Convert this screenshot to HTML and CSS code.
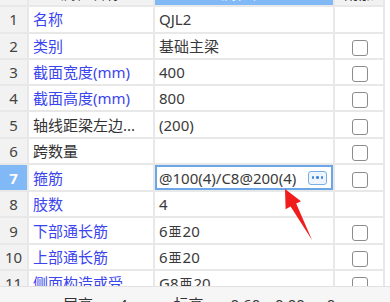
FILE: index.html
```html
<!DOCTYPE html>
<html lang="zh-CN">
<head>
  <meta charset="UTF-8">
  <meta name="viewport" content="width=device-width, initial-scale=1.0">
  <title>属性编辑器</title>
  <link rel="stylesheet" href="styles.css">
</head>
<body>
  <div class="panel">
    <div class="grid-area">
      <table class="props">
        <colgroup>
          <col class="col-num">
          <col class="col-name">
          <col class="col-value">
          <col class="col-extra">
        </colgroup>
        <thead>
          <tr>
            <th class="num"></th>
            <th>属性名称</th>
            <th class="active">属性值</th>
            <th>附加</th>
          </tr>
        </thead>
        <tbody>
          <tr>
            <td class="num">1</td>
            <td class="name">名称</td>
            <td class="value">QJL2</td>
            <td class="extra"></td>
          </tr>
          <tr>
            <td class="num">2</td>
            <td class="name">类别</td>
            <td class="value">基础主梁</td>
            <td class="extra"><span class="check"></span></td>
          </tr>
          <tr>
            <td class="num">3</td>
            <td class="name">截面宽度(mm)</td>
            <td class="value">400</td>
            <td class="extra"><span class="check"></span></td>
          </tr>
          <tr>
            <td class="num">4</td>
            <td class="name">截面高度(mm)</td>
            <td class="value">800</td>
            <td class="extra"><span class="check"></span></td>
          </tr>
          <tr>
            <td class="num">5</td>
            <td class="name plain">轴线距梁左边...</td>
            <td class="value">(200)</td>
            <td class="extra"><span class="check"></span></td>
          </tr>
          <tr>
            <td class="num">6</td>
            <td class="name plain">跨数量</td>
            <td class="value"></td>
            <td class="extra"><span class="check"></span></td>
          </tr>
          <tr class="selected">
            <td class="num">7</td>
            <td class="name">箍筋</td>
            <td class="value editing">
              <div class="editor">
                <span class="editor-text">@100(4)/C8@200(4)</span>
                <button class="more"><span></span><span></span><span></span></button>
              </div>
            </td>
            <td class="extra"><span class="check"></span></td>
          </tr>
          <tr>
            <td class="num">8</td>
            <td class="name">肢数</td>
            <td class="value">4</td>
            <td class="extra"></td>
          </tr>
          <tr>
            <td class="num">9</td>
            <td class="name">下部通长筋</td>
            <td class="value">6<span class="rebar">亜</span>20</td>
            <td class="extra"><span class="check"></span></td>
          </tr>
          <tr>
            <td class="num">10</td>
            <td class="name">上部通长筋</td>
            <td class="value">6<span class="rebar">亜</span>20</td>
            <td class="extra"><span class="check"></span></td>
          </tr>
          <tr>
            <td class="num">11</td>
            <td class="name">侧面构造或受...</td>
            <td class="value">G8<span class="rebar">亜</span>20</td>
            <td class="extra"><span class="check"></span></td>
          </tr>
        </tbody>
      </table>
    </div>

    <div class="status">
      <span class="status-item s1">层高</span>
      <span class="status-item s2">4</span>
      <span class="status-item s3">标高</span>
      <span class="status-item s4">-0.60</span>
      <span class="status-item s5">-0.00</span>
      <span class="status-item s6">0</span>
    </div>

    <!-- annotation arrow drawn over the grid -->
    <svg class="arrow" width="390" height="302" viewBox="0 0 390 302">
      <polygon points="285,189 301,201.2 296.2,203.6 312,240 290.6,206.4 285.6,209.2" fill="#f01d1d"/>
    </svg>
  </div>
</body>
</html>
```

FILE: styles.css
```css
html, body {
  margin: 0;
  padding: 0;
  background: #fff;
}
body {
  font-family: "Noto Sans", "Noto Sans CJK SC", sans-serif;
  font-size: 15px;
  color: #333;
  overflow: hidden;
  height: 302px;
}
.panel {
  position: relative;
  width: 390px;
  height: 302px;
  overflow: hidden;
}
.grid-area {
  height: 286px;
  overflow: hidden;
}
.props {
  table-layout: fixed;
  border-collapse: collapse;
  width: 384px;
  margin-top: -20px;
}
.col-num { width: 28px; }
.col-name { width: 126px; }
.col-value { width: 180px; }
.col-extra { width: 50px; }

.props th,
.props td {
  height: 26.3px;
  padding: 0 0 0 4px;
  border: 2px solid #e8e8e8;
  white-space: nowrap;
  overflow: hidden;
  box-sizing: border-box;
  line-height: 20px;
}
.props tr:first-child th,
.props tr:first-child td { border-top: none; }
.props th:first-child,
.props td:first-child { border-left: none; }

.props th {
  background: #f2f2f2;
  font-weight: normal;
  color: #333;
  text-align: center;
  padding: 0;
}
.props th.active {
  background: #80b9f6;
  color: #fff;
}
.props td.num {
  background: #f2f2f2;
  text-align: center;
  padding: 0;
  color: #444;
}
.props tr.selected td.num {
  background: #80b9f6;
  color: #fff;
  font-weight: bold;
}
.props td.name {
  color: #3b45ee;
}
.props td.name.plain {
  color: #333;
}
.props td.value {
  color: #3a3a3a;
}
.props td.extra {
  text-align: center;
  padding: 0;
}
.check {
  display: inline-block;
  width: 14px;
  height: 14px;
  border: 1.5px solid #8c8c8c;
  border-radius: 3px;
  vertical-align: middle;
  margin-left: 2px;
  background: #fff;
}
.rebar {
  font-size: 13px;
  margin: 0 1px;
  vertical-align: 1px;
}

.props td.editing {
  padding: 0;
}
.editor {
  display: flex;
  align-items: center;
  justify-content: space-between;
  height: 25px;
  border: 2px solid #6ba6e8;
  padding: 0 4px 0 2px;
  box-sizing: border-box;
}
.more {
  display: flex;
  align-items: center;
  justify-content: center;
  gap: 2px;
  width: 19px;
  height: 14px;
  padding: 0;
  border: 1px solid #7aaee8;
  border-radius: 3px;
  background: #eef5fe;
}
.more span {
  width: 2.5px;
  height: 2.5px;
  border-radius: 50%;
  background: #3f86de;
}

.status {
  height: 16px;
  background: #f6f6f6;
  border-top: 1px solid #e2e2e2;
  font-size: 15px;
  color: #333;
  display: flex;
  align-items: flex-start;
  padding-top: 7px;
  line-height: 20px;
}
.status-item { display: inline-block; }
.s1 { margin-left: 63px; }
.s2 { margin-left: 26px; }
.s3 { margin-left: 46px; }
.s4 { margin-left: 22px; }
.s5 { margin-left: 10px; }
.s6 { margin-left: 22px; }

.arrow {
  position: absolute;
  left: 0;
  top: 0;
  pointer-events: none;
}
```
